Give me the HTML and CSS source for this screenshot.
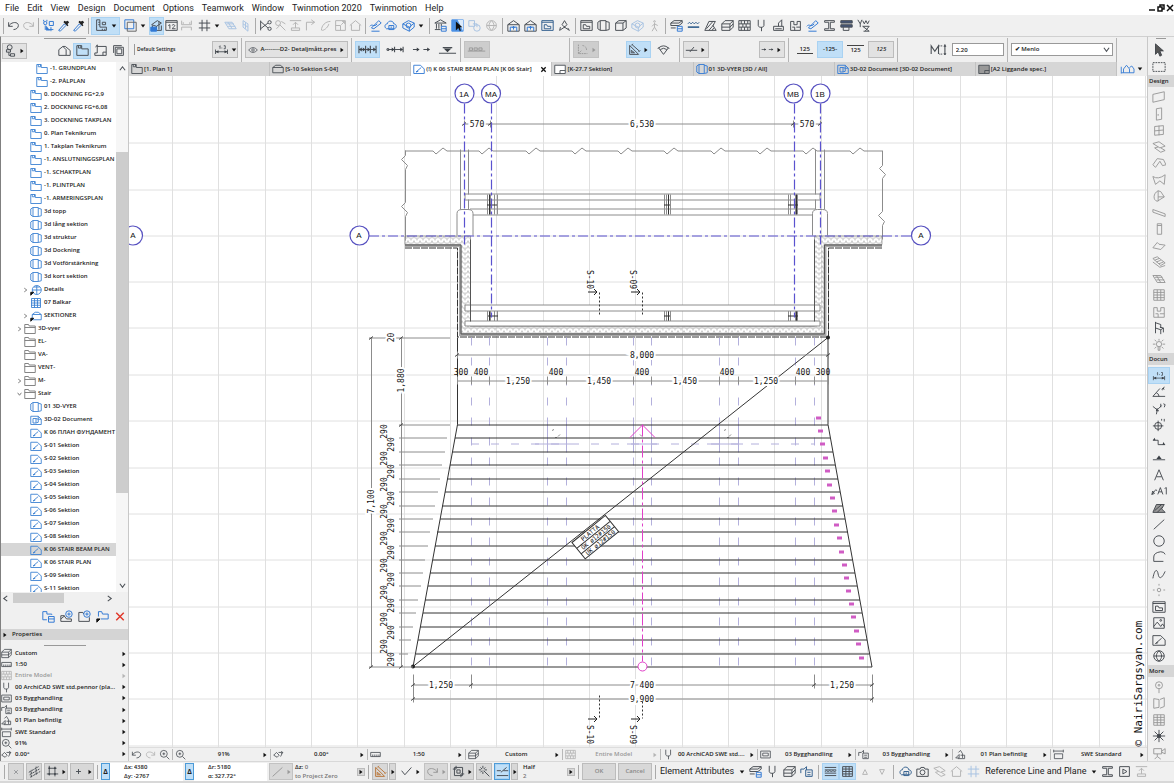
FILE: index.html
```html
<!DOCTYPE html>
<html lang="en">
<head>
<meta charset="utf-8">
<title>K 06 STAIR BEAM PLAN</title>
<link rel="stylesheet" href="styles.css">
</head>
<body>
<svg class="defs" aria-hidden="true">
<symbol id="undo" viewBox="0 0 16 16"><path d="M2 4v5h5M2 9C5 3 14 3 14 8c0 3-3 5-6 5"/></symbol>
<symbol id="redo" viewBox="0 0 16 16"><path d="M14 4v5H9M14 9C11 3 2 3 2 8c0 3 3 5 6 5"/></symbol>
<symbol id="pick" viewBox="0 0 16 16"><circle cx="4" cy="5" r="2"/><path d="M2 1v2M6 1v2M4 8v5l2-2M9 3h5v5h-5zM8 13h6M11 10v5"/><path d="M5 8l5 6H5z" class="s"/></symbol>
<symbol id="dropper" viewBox="0 0 16 16"><path d="M2 14l7-8 2 2-7 7z"/><path d="M8 4l5 5 1-1-1-2 2-2-2-2-2 1-2-1z" fill="#222" stroke="none"/></symbol>
<symbol id="plan" viewBox="0 0 16 16"><path d="M1 14V2h6v4h8v8zM3 2v3h3V2"/></symbol>
<symbol id="elev" viewBox="0 0 16 16"><path d="M1 13V6l4-3h6l4 3v7zM1 6h14"/></symbol>
<symbol id="sheet" viewBox="0 0 16 16"><path d="M1 3h14v11H1z" fill="#999"/><path d="M9 14v-4h6"/></symbol>
<symbol id="sheetw" viewBox="0 0 16 16"><path d="M1 3h14v11H1z" fill="#fff"/><path d="M8 14v-4h7"/></symbol>
<symbol id="box3" viewBox="0 0 16 16"><path d="M4 2h7v12H4zM11 3l4 1v9l-4 1M1 4l3-2M1 4v8l3 2"/></symbol>
<symbol id="sec" viewBox="0 0 16 16"><path d="M1 3h9l5 5v6H1zM4 12l7-6M4 12l3-1"/></symbol>
<symbol id="doc3" viewBox="0 0 16 16"><path d="M1 3h10l4 4v7H1zM4 6h4v6H4zM8 6l3 1v4l-3 1M11 3v4h4"/></symbol>
<symbol id="folder" viewBox="0 0 16 16"><path d="M1 14V2h5l1 2h8v10zM1 6h14"/></symbol>
<symbol id="detail" viewBox="0 0 16 16"><circle cx="9" cy="8" r="6"/><path d="M3 8h12M9 2v12M5 4h8"/><path d="M1 15v-4h4z" fill="#111" stroke="#111"/></symbol>
<symbol id="sched" viewBox="0 0 16 16"><path d="M2 2h12v12H2zM2 5h12M2 8h12M2 11h12M6 2v12M10 2v12"/></symbol>
<symbol id="sects" viewBox="0 0 16 16"><path d="M3 13V6l4-3h4l4 3v7zM3 6h12"/><path d="M1 15v-4h4z" fill="#111" stroke="#111"/></symbol>
<symbol id="right" viewBox="0 0 8 8"><path d="M2 1l4 3-4 3z" class="s"/></symbol>
<symbol id="down" viewBox="0 0 8 8"><path d="M1 2h6L4 6z" class="s"/></symbol>
<symbol id="chev" viewBox="0 0 8 8"><path d="M2 1l4 3-4 3"/></symbol>
<symbol id="chevd" viewBox="0 0 8 8"><path d="M1 2l3 4 3-4"/></symbol>
<symbol id="chevu" viewBox="0 0 8 8"><path d="M1 6l3-4 3 4"/></symbol>
<symbol id="chevl" viewBox="0 0 8 8"><path d="M6 1L2 4l4 3"/></symbol>
<symbol id="ruler" viewBox="0 0 16 16"><path d="M1 5h14v6H1zM4 8v3M7 8v3M10 8v3M13 8v3"/></symbol>
<symbol id="rulerv" viewBox="0 0 16 16"><path d="M2 1v13h12v-4H6V1zM9 4h4v3H9zM4 4h2M4 7h2M9 12v2M12 12v2" /></symbol>
<symbol id="square" viewBox="0 0 16 16"><path d="M1 1h11v11H1z"/><path d="M4 4h11v11H4z" stroke="#666"/></symbol>
<symbol id="snap" viewBox="0 0 16 16"><path d="M2 7l7-5 5 3-6 4zM3 8v5h4M8 9v5h6V8M11 3v10"/><path d="M1 10h7v5H1z" fill="#3279d4" stroke="#3279d4"/></symbol>
<symbol id="twelve" viewBox="0 0 16 16"><path d="M1 2h14v12H1zM1 4h14M4 8l2-1v5M9 8c0-2 3-1 3 0 0 1-2 2-3 4h4"/></symbol>
<symbol id="ibeam" viewBox="0 0 16 16"><path d="M2 2h12v2H9v8h5v2H2v-2h5V4H2z"/></symbol>
<symbol id="hh" viewBox="0 0 16 16"><path d="M2 2v5h12V2M2 14v-4h12v4M4 4v2M12 4v2"/></symbol>
<symbol id="hash" viewBox="0 0 16 16"><path d="M5 1v14M11 1v14M1 5h14M1 11h14"/></symbol>
<symbol id="para" viewBox="0 0 16 16"><path d="M1 4h9l5 8H6zM3 6h9M5 9h9M5 4l5 8"/></symbol>
<symbol id="parav" viewBox="0 0 16 16"><path d="M5 2l6 4v9l-6-5zM5 6l6 4M8 4v8"/></symbol>
<symbol id="cut" viewBox="0 0 16 16"><circle cx="13" cy="4" r="2"/><circle cx="13" cy="12" r="2"/><path d="M2 3l9 8M2 12l9-7M2 2v12"/></symbol>
<symbol id="wrench" viewBox="0 0 16 16"><circle cx="5" cy="5" r="3"/><path d="M7 7l7 7M9 3l5 3M3 12l4-4"/></symbol>
<symbol id="adjust" viewBox="0 0 16 16"><path d="M1 2h14M8 4v7M5 7l3-3 3 3M3 11h10v3H3z"/></symbol>
<symbol id="corner" viewBox="0 0 16 16"><path d="M3 14V4h10M9 1l4 3-4 3"/></symbol>
<symbol id="arc" viewBox="0 0 16 16"><path d="M3 14C3 8 8 3 14 3M4 14c3 0 8-5 8-8"/></symbol>
<symbol id="resize" viewBox="0 0 16 16"><path d="M2 2h12v12H2zM2 8h6v6M9 7l4-4M10 3h3v3"/></symbol>
<symbol id="home" viewBox="0 0 16 16"><path d="M1 8l7-6 7 6M3 7v7h10V7"/></symbol>
<symbol id="house" viewBox="0 0 16 16"><path d="M1 7l7-5 7 5v8H1zM1 7h14"/><path d="M4 15v-5h8v5M8 13V9M6 11l2-2 2 2" stroke="#3279d4"/></symbol>
<symbol id="pencil" viewBox="0 0 16 16"><path d="M3 11l9-9 3 3-9 7zM1 9c3-4 5 2 9-3M3 15h10"/></symbol>
<symbol id="cloud" viewBox="0 0 16 16"><path d="M3 12C0 10 1 6 4 6c1-5 8-4 8 0 4 0 4 5 1 6z"/><path d="M6 8h6v5H6zM8 10h2"/></symbol>
<symbol id="cube" viewBox="0 0 16 16"><path d="M2 5l4-3h9v9l-4 3H2zM2 5h9v9M11 5l4-3"/></symbol>
<symbol id="cubes" viewBox="0 0 16 16"><path d="M1 6l7-4 7 3-6 5zM1 6v5l8 4v-5M15 5v5l-6 5"/><circle cx="8" cy="8" r="3"/></symbol>
<symbol id="bank" viewBox="0 0 16 16"><path d="M1 5l7-4 7 4zM3 6v6M6 6v6M9 6v3M1 13h7"/><path d="M9 9h6v6H9zM9 12h6" stroke="#3279d4"/></symbol>
<symbol id="cursorbox" viewBox="0 0 16 16"><path d="M1 1h14v14H1z" fill="#4c92e6" stroke="#4c92e6"/><path d="M8 1h7v14z" fill="#dcebfb" stroke="none"/><path d="M6 3v11l3-3 2 4 1-1-1-4h3z" fill="#111" stroke="none"/></symbol>
<symbol id="copyc" viewBox="0 0 16 16"><path d="M1 2h7v7H1zM6 6h5v4"/><circle cx="11" cy="11" r="4"/></symbol>
<symbol id="globe" viewBox="0 0 16 16"><circle cx="8" cy="8" r="6"/><path d="M2 8h12M8 2c-4 4-4 8 0 12M8 2c4 4 4 8 0 12"/></symbol>
<symbol id="window" viewBox="0 0 16 16"><path d="M1 2h14v12H1zM1 4h14M4 12V7h3l1 2h4v3z"/></symbol>
<symbol id="axo" viewBox="0 0 16 16"><path d="M8 2l3 5-3 3-3-3zM8 9v2M8 10l-6 4M8 10l6 4M2 14l1-4M14 14l-2-3"/></symbol>
<symbol id="walk" viewBox="0 0 16 16"><circle cx="8" cy="3" r="1"/><path d="M8 5v5l3 5M8 10l-3 5M5 9l3-3 4 2"/></symbol>
<symbol id="layers" viewBox="0 0 16 16"><path d="M1 6l4-4h10l-4 4zM1 6v8h10l4-4V2M1 10h10l4-4M11 6v8"/></symbol>
<symbol id="layb" viewBox="0 0 16 16"><path d="M1 5l4-3h10l-4 3zM1 5v3h10l4-3V2M1 11h6"/><path d="M9 9h6v6H9zM9 12h6" stroke="#3279d4"/></symbol>
<symbol id="wave" viewBox="0 0 16 16"><path d="M1 6l2-2 2 2 2-2 2 2 2-2 2 2 2-2"/><path d="M1 10h14" stroke-width="2"/></symbol>
<symbol id="hatch" viewBox="0 0 16 16"><path d="M1 14L6 3h8l-3 5 4 6zM3 12l8-9M6 14l6-7M10 14l2-3"/></symbol>
<symbol id="mesh" viewBox="0 0 16 16"><path d="M1 2h14v12H1zM1 6h14M1 10h14M4 2v4M8 2v4M12 2v4M6 6v4M10 6v4M4 10v4M8 10v4M12 10v4"/></symbol>
<symbol id="bands" viewBox="0 0 16 16"><path d="M1 3h14M1 13h14M1 6h14M1 10h14M1 8l2-1 2 1 2-1 2 1 2-1 2 1 2-1"/></symbol>
<symbol id="pen" viewBox="0 0 16 16"><path d="M4 1v7c0 3 7 3 7 0V1M8 10v5"/></symbol>
<symbol id="brush" viewBox="0 0 16 16"><path d="M2 9h12v5H2zM8 9V5l4-4v8M4 12h8"/></symbol>
<symbol id="comp" viewBox="0 0 16 16"><path d="M1 2h14v3H1zM1 7h14v3H1z" fill="#445577"/><path d="M4 10v4h7v-4"/></symbol>
<symbol id="yw" viewBox="0 0 16 16"><path d="M1 1l3 5 2-5M4 6v4M7 2l2 4 2-4 2 4 2-4M7 9h8l-5 6M8 15h7M7 9l8 6"/></symbol>
<symbol id="org" viewBox="0 0 16 16"><circle cx="7" cy="4" r="3"/><path d="M3 7h5v3H3zM8 12h5v3H8zM6 10v4h2"/></symbol>
<symbol id="model" viewBox="0 0 16 16"><path d="M1 14V7l5-4 4 4v7zM6 3h3l6 5v6h-5"/></symbol>
<symbol id="layout" viewBox="0 0 16 16"><path d="M4 1v10H1v3h14V3H4M11 14v-4h4M2 4l2-3"/></symbol>
<symbol id="books" viewBox="0 0 16 16"><path d="M4 4h10v10H4zM2 11V2h10M6 6h6v6H6z"/></symbol>
<symbol id="dim" viewBox="0 0 20 16"><path d="M2 11h16M2 8v6M18 8v6M7 4l1-1v4M10 6h1M13 3h2v4h-2"/><path d="M2 11l4-2v4zM18 11l-4-2v4z" class="s"/></symbol>
<symbol id="dims" viewBox="0 0 20 10"><path d="M1 5h18M1 1v8M8 1v8M13 1v8M19 1v8"/><path d="M1 5l3-2v4zM8 5L5 3v4zM13 5l-3-2v4zM19 5l-3-2v4z" class="s"/></symbol>
<symbol id="dimc" viewBox="0 0 20 10"><path d="M3 5h14M9 2v6M18 2v6"/><circle cx="2" cy="5" r="1"/><path d="M9 5L6 3v4zM18 5l-3-2v4z" class="s"/></symbol>
<symbol id="dima" viewBox="0 0 20 10"><path d="M1 5h6M12 5h6"/><path d="M8 5L5 3v4zM19 5l-3-2v4z" class="s"/></symbol>
<symbol id="level" viewBox="0 0 20 10"><path d="M1 9h18M5 3h10"/><path d="M6 4h8l-4 4z" class="s"/></symbol>
<symbol id="chain" viewBox="0 0 24 10"><path d="M1 7h22M3 3h4v3H3zM9 3h4v3H9zM15 3h4v3h-4z"/></symbol>
<symbol id="axes" viewBox="0 0 16 16"><path d="M3 2v11h11M3 13l4-4M8 3q5 1 5 6" stroke-dasharray="2 1"/></symbol>
<symbol id="tri" viewBox="0 0 16 16"><path d="M2 3v11h11zM4 9v3h4zM5 2l9 8M4 3l2-2M13 11l2-2"/></symbol>
<symbol id="fan" viewBox="0 0 16 16"><path d="M2 6q6-5 12 0L8 14zM4 8q4-3 8 0"/><path d="M1 7l2-2M15 7l-2-2"/></symbol>
<symbol id="slash" viewBox="0 0 16 16"><path d="M1 9h14M6 11l5-6"/></symbol>
<symbol id="mheight" viewBox="0 0 18 12"><path d="M1 11V2l4 6 4-6v9"/><path d="M10 2h4M10 11h4" stroke-dasharray="1 1"/><path d="M16 2v9M15 3l1-2 1 2M15 10l1 2 1-2"/></symbol>
<symbol id="arrow" viewBox="0 0 16 16"><path d="M4 1v12l3-3 2 5 2-1-2-5h4z" fill="#555"/></symbol>
<symbol id="marquee" viewBox="0 0 16 16"><path d="M1 3h14v10H1z" stroke-dasharray="2 1"/></symbol>
<symbol id="wall" viewBox="0 0 16 16"><path d="M1 5l13-3v9L1 14z"/></symbol>
<symbol id="door" viewBox="0 0 16 16"><path d="M5 2l6-1v13l-6 1zM7 8v2"/></symbol>
<symbol id="win" viewBox="0 0 16 16"><path d="M3 4l10-1v10L3 14zM8 3v11M3 9l10-1"/></symbol>
<symbol id="slabs" viewBox="0 0 16 16"><path d="M1 4l7-2 7 5-6 2zM3 9l4-1M3 9l7 5 5-2-5-3"/></symbol>
<symbol id="roof" viewBox="0 0 16 16"><path d="M1 10l5-7 7 1 3 6-4 1-3-5-5 7z"/></symbol>
<symbol id="shell" viewBox="0 0 16 16"><path d="M1 4q6 4 14-2l-1 11-5-4-5 4z"/></symbol>
<symbol id="morph" viewBox="0 0 16 16"><path d="M7 2C1 5 1 13 6 14l8-5-4-6zM7 2v12M7 9h7"/></symbol>
<symbol id="beam" viewBox="0 0 16 16"><path d="M1 4l14 5v3L1 7z"/></symbol>
<symbol id="column" viewBox="0 0 16 16"><path d="M6 2h5v12H6zM6 4h5"/></symbol>
<symbol id="slab" viewBox="0 0 16 16"><path d="M1 10l5-6 2 2 7 1-5 5z"/></symbol>
<symbol id="stairs" viewBox="0 0 16 16"><path d="M1 4l5-2 9 7-5 3zM3 6l5-2M5 8l5-2M8 10l5-2M1 8l8 6 6-2"/></symbol>
<symbol id="stamp" viewBox="0 0 16 16"><path d="M2 3v11h12V3h-4v4H6V3zM4 10h3v4M9 10h5"/></symbol>
<symbol id="chair" viewBox="0 0 16 16"><path d="M4 1v13M4 2l6 2v4M4 8l6 2 3-2-4-1M10 10v5M13 8v5"/></symbol>
<symbol id="lamp" viewBox="0 0 16 16"><circle cx="8" cy="7" r="3"/><path d="M7 10v4h2v-4M8 1v2M1 7h3M12 7h3M3 2l2 2M13 2l-2 2M3 12l2-2M13 12l-2-2"/></symbol>
<symbol id="angle" viewBox="0 0 16 16"><path d="M1 13h14M1 13L9 4M5 9q3 1 3 4M11 5q2-3 3 0M14 2l-2 4"/></symbol>
<symbol id="radial" viewBox="0 0 16 16"><path d="M1 5l5 4-1 5M5 10l6-6M10 2v4M13 2l2 1-1 3M6 7l-1 3h3"/></symbol>
<symbol id="levelc" viewBox="0 0 16 16"><circle cx="7" cy="9" r="4"/><path d="M7 3v12M1 9h12M11 3V1M14 1v3"/></symbol>
<symbol id="steps" viewBox="0 0 16 16"><path d="M1 6h6v5h8"/><path d="M1 6l2-3 1 3zM12 11l1-3 2 3z" class="s"/></symbol>
<symbol id="lvl" viewBox="0 0 16 16"><path d="M1 10h14"/><path d="M5 9l3-4 3 4z" class="s"/></symbol>
<symbol id="text" viewBox="0 0 16 16"><path d="M3 14L8 2l5 12M5 10h6"/></symbol>
<symbol id="label" viewBox="0 0 20 16"><path d="M1 12l5-6M1 12l1-4 2 3zM6 8l1-1M8 12l3-8 3 8M9 9h4M16 5l2-1v8"/></symbol>
<symbol id="fill" viewBox="0 0 16 16"><path d="M1 13L5 4h9l-3 5 4 4z" fill="#999"/><path d="M3 11l8-7M6 13l6-6"/></symbol>
<symbol id="line" viewBox="0 0 16 16"><path d="M2 14L14 3"/></symbol>
<symbol id="circle" viewBox="0 0 16 16"><circle cx="8" cy="8" r="6"/></symbol>
<symbol id="poly" viewBox="0 0 16 16"><path d="M15 5q-1-3-5-3Q2 3 2 8v5h11"/></symbol>
<symbol id="spline" viewBox="0 0 16 16"><path d="M1 13C3 2 6 2 7 8s4 6 8-3"/></symbol>
<symbol id="hot" viewBox="0 0 16 16"><circle cx="8" cy="8" r="2"/><path d="M8 1v2M8 13v2M1 8h2M13 8h2"/></symbol>
<symbol id="image" viewBox="0 0 16 16"><path d="M2 2h12v12H2zM2 12l4-5 4 5 2-3 2 3"/><circle cx="10" cy="5" r="1"/></symbol>
<symbol id="cam" viewBox="0 0 16 16"><path d="M1 5h4l1-2h4l1 2h4v9H1z"/><circle cx="8" cy="9" r="3"/></symbol>
<symbol id="video" viewBox="0 0 16 16"><path d="M2 3h9v6H2zM11 6l4-3v6l-4-2M6 9v3M3 15l3-3 4 3"/></symbol>
<symbol id="sun" viewBox="0 0 16 16"><circle cx="8" cy="8" r="2"/><path d="M8 1v14M1 8h14M3 3l10 10M13 3L3 13"/></symbol>
<symbol id="pin" viewBox="0 0 16 16"><circle cx="8" cy="6" r="4"/><circle cx="8" cy="6" r="1"/><path d="M8 10v5"/></symbol>
<symbol id="pane" viewBox="0 0 16 16"><path d="M2 3l6 1v9l-6 1zM9 4l5-2v10l-5 2"/></symbol>
<symbol id="zoom" viewBox="0 0 16 16"><circle cx="7" cy="7" r="5"/><path d="M11 11l4 4M7 5v4M5 7h4"/></symbol>
<symbol id="orient" viewBox="0 0 16 16"><path d="M1 9l4-4 4 4-3 3zM8 5h6l-3 6M12 3l2 2-2 2"/></symbol>
<symbol id="frame" viewBox="0 0 16 16"><path d="M1 3h14v10H1zM4 6h8v4H4z"/></symbol>
<symbol id="reno" viewBox="0 0 16 16"><path d="M1 10V5h4l3-3v4M7 6h8v8H7zM9 9h4M9 12h4"/></symbol>
<symbol id="build" viewBox="0 0 16 16"><path d="M1 13l5-5v5zM5 5l3-3 3 5v6M8 9h6v5H4"/></symbol>
<symbol id="std" viewBox="0 0 16 16"><path d="M1 3h14M1 1v4M15 1v4M2 7h12v7H2z"/></symbol>
<symbol id="newb" viewBox="0 0 16 16"><path d="M1 12V2h5v3h6M1 12h5M12 5v1"/><path d="M8 8h7v7H8zM8 11h7"/></symbol>
<symbol id="newc" viewBox="0 0 16 16"><path d="M1 14V7h4l3 4h6v3zM1 11l5-4"/><circle cx="11" cy="5" r="4" stroke="#3279d4"/><path d="M11 3v4M9 5h4" stroke="#3279d4"/></symbol>
<symbol id="newf" viewBox="0 0 16 16"><path d="M1 14V3h5l1 2M14 9v5H1"/><circle cx="11" cy="5" r="4" stroke="#3279d4"/><path d="M11 3v4M9 5h4" stroke="#3279d4"/></symbol>
<symbol id="link" viewBox="0 0 16 16"><path d="M3 8V2h4l1 3h7v6H6"/><path d="M1 15v-4h4z" fill="#111" stroke="#111"/></symbol>
<symbol id="x" viewBox="0 0 16 16"><path d="M3 3l10 10M13 3L3 13"/></symbol>
<symbol id="eye" viewBox="0 0 16 16"><path d="M1 8q7-8 14 0-7 8-14 0"/><circle cx="8" cy="8" r="2"/></symbol>
<symbol id="hatchl" viewBox="0 0 16 16"><path d="M1 9L13 2M2 12L14 5M3 15l12-7M4 15V6M10 12V2" stroke-dasharray="3 1"/></symbol>
<symbol id="grids" viewBox="0 0 16 16"><path d="M4 1v12M1 11h14M4 4h9M11 2v12"/><path d="M3 3h2v2H3zM10 3h2v2h-2zM3 10h2v2H3zM10 10h2v2h-2z" class="s"/></symbol>
<symbol id="plus" viewBox="0 0 16 16"><path d="M8 5v6M5 8h6"/></symbol>
<symbol id="check" viewBox="0 0 16 16"><path d="M2 7l4 5 8-9"/></symbol>
<symbol id="bbox" viewBox="0 0 16 16"><path d="M3 3h10v10H3zM1 5h4V1M11 15v-4h4M6 6h4v4H6z"/></symbol>
<symbol id="wand" viewBox="0 0 16 16"><path d="M7 7l7 7M6 1v3M6 8v3M1 6h3M8 6h3M3 3l2 2M9 3L7 5M3 9l2-2"/></symbol>
<symbol id="guide" viewBox="0 0 16 16"><path d="M1 7h5M6 9l7-6M9 7h6M1 13h14"/></symbol>
<symbol id="tru" viewBox="0 0 10 10"><path d="M5 2l3 6H2z"/></symbol>
<symbol id="trd" viewBox="0 0 10 10"><path d="M5 8L2 2h6z"/></symbol>
<symbol id="play" viewBox="0 0 16 16"><path d="M2 2h12v12H2zM6 5l5 3-5 3z"/></symbol>
<symbol id="skyline" viewBox="0 0 20 16"><path d="M1 14V5M1 13h17M4 13V8l4-5 4 5v5M12 6l3-2 3 4v5"/></symbol>
<symbol id="mini" viewBox="0 0 8 8"><path d="M1 6h6"/></symbol>
<symbol id="rest" viewBox="0 0 8 8"><path d="M1 3h4v4H1zM3 3V1h4v4H5"/></symbol>
<symbol id="cross" viewBox="0 0 8 8"><path d="M1 1l6 6M7 1L1 7"/></symbol>
</svg>

<header class="menubar">
<nav><a href="#">File</a><a href="#">Edit</a><a href="#">View</a><a href="#">Design</a><a href="#">Document</a><a href="#">Options</a><a href="#">Teamwork</a><a href="#">Window</a><a href="#">Twinmotion 2020</a><a href="#">Twinmotion</a><a href="#">Help</a></nav>
<div class="winctl"><button aria-label="Minimize"><svg><use href="#mini"/></svg></button><button aria-label="Restore"><svg><use href="#rest"/></svg></button><button aria-label="Close"><svg><use href="#cross"/></svg></button></div>
</header>

<div class="toolbar">
<div class="grp tight"><button aria-label="Undo"><svg><use href="#undo"/></svg></button><button class="dis" aria-label="Redo"><svg><use href="#redo"/></svg></button></div>
<div class="grp tight"><button class="blue" aria-label="Find"><svg><use href="#pick"/></svg></button><button class="blue" aria-label="Pick up"><svg><use href="#dropper"/></svg></button><button class="blue" aria-label="Inject"><svg><use href="#dropper"/></svg></button></div>
<div class="grp tight"><button class="on split" aria-label="Rulers"><svg><use href="#rulerv"/></svg><svg class="ar"><use href="#down"/></svg></button><button class="split blue" aria-label="Frames"><svg><use href="#square"/></svg><svg class="ar"><use href="#down"/></svg></button><button class="on" aria-label="Snap"><svg><use href="#snap"/></svg></button><button aria-label="Dimensions"><svg><use href="#twelve"/></svg></button><button class="dis" aria-label="Guides"><svg><use href="#hh"/></svg></button><button class="split" aria-label="Grid"><svg><use href="#hash"/></svg><svg class="ar"><use href="#down"/></svg></button><button class="pale" aria-label="Plane"><svg><use href="#para"/></svg></button><button class="pale" aria-label="Vertical plane"><svg><use href="#parav"/></svg></button></div>
<div class="grp tight"><button aria-label="Cut"><svg><use href="#cut"/></svg></button><button class="dis" aria-label="Trim"><svg><use href="#wrench"/></svg></button><button class="dis" aria-label="Adjust"><svg><use href="#adjust"/></svg></button><button class="dis" aria-label="Intersect"><svg><use href="#corner"/></svg></button><button class="dis" aria-label="Fillet"><svg><use href="#arc"/></svg></button><button class="dis" aria-label="Resize"><svg><use href="#resize"/></svg></button><button class="dis" aria-label="Roof"><svg><use href="#home"/></svg></button></div>
<div class="grp tight"><button class="blue" aria-label="Edit"><svg><use href="#pencil"/></svg></button><button class="blue" aria-label="Cloud"><svg><use href="#cloud"/></svg></button><button class="split blue" aria-label="Model"><svg><use href="#cubes"/></svg><svg class="ar"><use href="#down"/></svg></button></div>
<div class="grp"><button aria-label="Library"><svg><use href="#bank"/></svg></button><button aria-label="Select"><svg><use href="#cursorbox"/></svg></button><button class="pale" aria-label="Copy"><svg><use href="#copyc"/></svg></button><button class="dis" aria-label="Publish"><svg><use href="#globe"/></svg></button></div>
<div class="grp"><button aria-label="Story up"><svg><use href="#house"/></svg></button><button aria-label="Story down"><svg><use href="#house"/></svg></button><button class="navy" aria-label="Worksheet"><svg><use href="#window"/></svg></button><button aria-label="Axonometry"><svg><use href="#axo"/></svg></button></div>
<div class="grp"><button aria-label="Floor plan"><svg><use href="#window"/></svg></button><button aria-label="3D"><svg><use href="#box3"/></svg></button><button aria-label="Perspective"><svg><use href="#cube"/></svg></button><button class="pale" aria-label="Orbit"><svg><use href="#cubes"/></svg></button><button class="dis" aria-label="Walk"><svg><use href="#walk"/></svg></button></div>
<div class="grp"><button aria-label="Layers"><svg><use href="#layb"/></svg></button><button class="navy" aria-label="Lines"><svg><use href="#wave"/></svg></button><button aria-label="Fills"><svg><use href="#hatch"/></svg></button><button aria-label="Surfaces"><svg><use href="#layers"/></svg></button><button aria-label="Composites"><svg><use href="#mesh"/></svg></button><button aria-label="Pens"><svg><use href="#pen"/></svg></button><button aria-label="Materials"><svg><use href="#brush"/></svg></button><button aria-label="Zones"><svg><use href="#stamp"/></svg></button><button class="blue" aria-label="Renovation"><svg><use href="#pencil"/></svg></button><button aria-label="Profiles"><svg><use href="#ibeam"/></svg></button><button aria-label="Attributes"><svg><use href="#comp"/></svg></button><button aria-label="Markup"><svg><use href="#yw"/></svg></button></div>
</div>

<main>
<aside class="navigator">
<div class="grip"></div>
<div class="navtabs"><button class="btn" aria-label="Project"><svg><use href="#org"/></svg><svg class="ar"><use href="#right"/></svg></button><div><button aria-label="Project map"><svg><use href="#model"/></svg></button><button class="on" aria-label="View map"><svg><use href="#plan"/></svg></button><button aria-label="Layout book"><svg><use href="#layout"/></svg></button><button aria-label="Publisher"><svg><use href="#books"/></svg></button></div></div>
<div class="treebox">
<ul class="tree">
<li class="deep"><i></i><svg><use href="#plan"/></svg>-1. GRUNDPLAN</li>
<li class="deep"><i></i><svg><use href="#plan"/></svg>-2. PÅLPLAN</li>
<li><i></i><svg><use href="#plan"/></svg>0. DOCKNING FG+2,9</li>
<li><i></i><svg><use href="#plan"/></svg>2. DOCKNING FG+6,08</li>
<li><i></i><svg><use href="#plan"/></svg>3. DOCKNING TAKPLAN</li>
<li><i></i><svg><use href="#plan"/></svg>0. Plan Teknikrum</li>
<li><i></i><svg><use href="#plan"/></svg>1. Takplan Teknikrum</li>
<li><i></i><svg><use href="#plan"/></svg>-1. ANSLUTNINGGSPLAN</li>
<li><i></i><svg><use href="#plan"/></svg>-1. SCHAKTPLAN</li>
<li><i></i><svg><use href="#plan"/></svg>-1. PLINTPLAN</li>
<li><i></i><svg><use href="#plan"/></svg>-1. ARMERINGSPLAN</li>
<li><i></i><svg><use href="#box3"/></svg>3d topp</li>
<li><i></i><svg><use href="#box3"/></svg>3d lång sektion</li>
<li><i></i><svg><use href="#box3"/></svg>3d struktur</li>
<li><i></i><svg><use href="#box3"/></svg>3d Dockning</li>
<li><i></i><svg><use href="#box3"/></svg>3d Votförstärkning</li>
<li><i></i><svg><use href="#box3"/></svg>3d kort sektion</li>
<li><svg class="tw"><use href="#chev"/></svg><svg><use href="#detail"/></svg>Details</li>
<li><i></i><svg><use href="#sched"/></svg>07 Balkar</li>
<li><svg class="tw"><use href="#chev"/></svg><svg><use href="#sects"/></svg>SEKTIONER</li>
<li class="fold"><svg class="tw"><use href="#chev"/></svg><svg><use href="#folder"/></svg>3D-vyer</li>
<li class="fold"><i></i><svg><use href="#folder"/></svg>EL-</li>
<li class="fold"><i></i><svg><use href="#folder"/></svg>VA-</li>
<li class="fold"><i></i><svg><use href="#folder"/></svg>VENT-</li>
<li class="fold"><svg class="tw"><use href="#chev"/></svg><svg><use href="#folder"/></svg>M-</li>
<li class="fold open"><svg class="tw"><use href="#chevd"/></svg><svg><use href="#folder"/></svg>Stair</li>
<li><i></i><svg><use href="#box3"/></svg>01 3D-VYER</li>
<li><i></i><svg><use href="#doc3"/></svg>3D-02 Document</li>
<li><i></i><svg><use href="#sec"/></svg>K 06 ПЛАН ФУНДАМЕНТ</li>
<li><i></i><svg><use href="#sec"/></svg>S-01 Sektion</li>
<li><i></i><svg><use href="#sec"/></svg>S-02 Sektion</li>
<li><i></i><svg><use href="#sec"/></svg>S-03 Sektion</li>
<li><i></i><svg><use href="#sec"/></svg>S-04 Sektion</li>
<li><i></i><svg><use href="#sec"/></svg>S-05 Sektion</li>
<li><i></i><svg><use href="#sec"/></svg>S-06 Sektion</li>
<li><i></i><svg><use href="#sec"/></svg>S-07 Sektion</li>
<li><i></i><svg><use href="#sec"/></svg>S-08 Sektion</li>
<li class="sel"><i></i><svg><use href="#sec"/></svg>K 06 STAIR BEAM PLAN</li>
<li><i></i><svg><use href="#sec"/></svg>K 06 STAIR PLAN</li>
<li><i></i><svg><use href="#sec"/></svg>S-09 Sektion</li>
<li><i></i><svg><use href="#sec"/></svg>S-11 Sektion</li>
</ul>
<div class="vscroll"><svg><use href="#chevu"/></svg><div class="thumb"></div><svg><use href="#chevd"/></svg></div>
</div>
<div class="hscroll"><svg><use href="#chevl"/></svg><div class="thumb"></div><svg><use href="#chev"/></svg></div>
<div class="navacts"><button class="blue" aria-label="Save view"><svg><use href="#newb"/></svg></button><button aria-label="Clone"><svg><use href="#newc"/></svg></button><button aria-label="New folder"><svg><use href="#newf"/></svg></button><button class="blue" aria-label="Shortcut"><svg><use href="#link"/></svg></button><button class="red" aria-label="Delete"><svg><use href="#x"/></svg></button></div>
<button class="prophead"><svg class="ar"><use href="#right"/></svg>Properties</button>
<div class="grip low"></div>
<div class="props">
<button><svg><use href="#layers"/></svg><span>Custom</span><svg class="ar"><use href="#right"/></svg></button>
<button><svg><use href="#ruler"/></svg><span>1:50</span><svg class="ar"><use href="#right"/></svg></button>
<button class="dis"><svg><use href="#mesh"/></svg><span>Entire Model</span><svg class="ar"><use href="#right"/></svg></button>
<button><svg><use href="#pen"/></svg><span>00 ArchiCAD SWE std.pennor (pla...</span><svg class="ar"><use href="#right"/></svg></button>
<button><svg><use href="#frame"/></svg><span>03 Bygghandling</span><svg class="ar"><use href="#right"/></svg></button>
<button><svg><use href="#reno"/></svg><span>03 Bygghandling</span><svg class="ar"><use href="#right"/></svg></button>
<button><svg><use href="#build"/></svg><span>01 Plan befintlig</span><svg class="ar"><use href="#right"/></svg></button>
<button><svg><use href="#std"/></svg><span>SWE Standard</span><svg class="ar"><use href="#right"/></svg></button>
<button><svg><use href="#zoom"/></svg><span>91%</span><svg class="ar"><use href="#right"/></svg></button>
<button><svg><use href="#orient"/></svg><span>0.00°</span><svg class="ar"><use href="#right"/></svg></button>
</div>
</aside>

<section class="work">
<div class="infobar">
<div class="cell spread"><span class="tiny">Default Settings</span><button class="btn" aria-label="Dimension tool"><svg class="d"><use href="#dim"/></svg><svg class="ar"><use href="#down"/></svg></button></div>
<div class="cell"><button class="btn layer"><svg class="eye"><use href="#eye"/></svg>A--------D2- Detaljmått.pres<svg class="ar"><use href="#right"/></svg></button></div>
<div class="cell spread"><button class="on wide" aria-label="Linear"><svg class="w"><use href="#dims"/></svg></button><button aria-label="Cumulative"><svg class="w"><use href="#dimc"/></svg></button><button aria-label="Base line"><svg class="w"><use href="#dima"/></svg></button><button aria-label="Elevation"><svg class="w"><use href="#level"/></svg></button></div>
<div class="cell"><button class="btn off" aria-label="Chain"><svg class="w"><use href="#chain"/></svg></button></div>
<div class="cell spread"><button class="btn off" aria-label="Geometry"><svg><use href="#axes"/></svg><svg class="ar"><use href="#right"/></svg></button><div class="pair"><button class="on wide" aria-label="Aligned"><svg><use href="#tri"/></svg><svg class="ar"><use href="#right"/></svg></button><button class="wide" aria-label="Arc length"><svg><use href="#fan"/></svg></button></div></div>
<div class="cell spread"><button class="btn" aria-label="Witness line"><svg><use href="#slash"/></svg><svg class="ar"><use href="#right"/></svg></button><button class="btn" aria-label="Marker"><svg><use href="#dima"/></svg><svg class="ar"><use href="#right"/></svg></button></div>
<div class="cell spread num"><button><u>125</u></button><button class="on">-125-</button><button><b>125</b></button><button class="btn"><em>125</em></button></div>
<div class="cell end"><label for="size"><svg class="w"><use href="#mheight"/></svg></label><input id="size" value="2.20" aria-label="Text height"></div>
<div class="cell"><div class="combo"><select aria-label="Font"><option>✔ Menlo</option></select><svg><use href="#chevd"/></svg></div></div>
<div class="rest"></div>
</div>
<div class="tabs">
<a href="#"><svg><use href="#plan"/></svg>[1. Plan 1]</a>
<a href="#"><svg><use href="#elev"/></svg>[S-10 Sektion S-04]</a>
<a href="#" class="cur"><svg class="bl"><use href="#sec"/></svg>(!) K 06 STAIR BEAM PLAN [K 06 Stair]<button aria-label="Close tab"><svg><use href="#x"/></svg></button></a>
<a href="#"><svg><use href="#sheetw"/></svg>[K-27.7 Sektion]</a>
<a href="#"><svg class="bl"><use href="#box3"/></svg>01 3D-VYER [3D / All]</a>
<a href="#"><svg class="bl"><use href="#doc3"/></svg>3D-02 Document [3D-02 Document]</a>
<a href="#"><svg><use href="#sheet"/></svg>[A2 Liggande spec.]</a>
<button class="blue more" aria-label="Tab list"><svg class="w"><use href="#skyline"/></svg><svg class="ar"><use href="#down"/></svg></button>
</div>
<div class="canvas">
<svg viewBox="129 76 1018 672" preserveAspectRatio="xMidYMid slice">
<defs>
<pattern id="ins" width="6" height="5" patternUnits="userSpaceOnUse"><path d="M0 1q0 3 3 3t3-3M3 4v1M3 0v1" fill="none" stroke="#b5b5b5" stroke-width=".8"/></pattern>
</defs>
<path class="gridl" d="M172.500 76V748M218.500 76V748M265.500 76V748M311.500 76V748M357.500 76V748M404.500 76V748M450.500 76V748M496.500 76V748M543.500 76V748M589.500 76V748M635.500 76V748M682.500 76V748M728.500 76V748M774.500 76V748M821.500 76V748M867.500 76V748M913.500 76V748M960.500 76V748M1006.500 76V748M1052.500 76V748M1099.500 76V748M1145.500 76V748M129 97.500H1147M129 143.500H1147M129 190.500H1147M129 236.500H1147M129 282.500H1147M129 328.500H1147M129 375.500H1147M129 421.500H1147M129 468.500H1147M129 514.500H1147M129 560.500H1147M129 607.500H1147M129 653.500H1147M129 699.500H1147M129 746.500H1147"/>

<g class="thin">
<path d="M405 151.500H433l3 3 7-6 4 3H479l3 3 7-6 4 3H526l3 3 7-6 4 3H572l3 3 7-6 4 3H618l3 3 7-6 4 3H664l3 3 7-6 4 3H711l3 3 7-6 4 3H757l3 3 7-6 4 3H803l3 3 7-6 4 3H850l3 3 7-6 4 3H882"/>
<path d="M405.500 151v5l-4 4 6 6-2 4v33l-4 4 6 6-2 4v24M882.500 151v15l-3 3 6 6-3 4v33l-4 4 6 6-2 4v14"/>
<path d="M460.500 150V210M468.500 150V195M468.500 200V210M815.500 150V195M815.500 200V210M824.500 150V210"/>
<path d="M457 236V214q0-4 5-4h6q5 0 5 4v22M812.500 236V214q0-4 5-4h5q5 0 5 4v22"/>
<path d="M465 194.500H820M465 200.500H820M465 194V200M820 194V200M470 209.500H815M473 215.500H812"/>
<path d="M487.500 195V215M490.500 195V215M494.500 195V215M497.500 195V215M487.500 306V326M490.500 306V326M494.500 306V326M497.500 306V326M788.500 195V215M790.500 195V215M795.500 195V215M797.500 195V215M788.500 306V326M790.500 306V326M795.500 306V326M797.500 306V326M664.500 195V215M666.500 195V215M670.500 195V215M664.500 306V326M666.500 306V326M670.500 306V326"/>
</g>
<path class="ink" d="M487 205.500h10M488 316.500h10M788 205.500h10M788 316.500h10M664 205.500h6M664 316.500h6M489.500 195v20M668.500 195v20M489.500 306v20M668.500 306v20M796.500 195v20M796.500 306v20"/>
<path fill="url(#ins)" stroke="#888" stroke-width=".7" d="M405 236.500H470.500V327H814.500V236.500H882V245H824V334H461V245H405z"/>
<path class="thin beams" d="M465 305.500H820V311.500H465zM465 321.500H820V326.500H465z"/>
<path fill="none" stroke="#aaa" stroke-width="2" d="M405 246.500H460V335.500H825.500V246.500H882"/>
<path class="wallin" d="M405 245.500H461V334.500H824.500V245.500H882M470.500 240V322M814.500 240V322"/>
<path fill="none" stroke="#333" stroke-dasharray="7 1" d="M405 248.500H457.500V337.500H828.500V248.500H882"/>

<g class="joist"><path d="M471.500 338V667M489.500 338V667M547.500 338V667M566.500 338V667M633.500 338V667M651.500 338V667M719.500 338V667M738.500 338V667M795.500 338V667M814.500 338V667M471 444.500H814"/></g>
<path class="joists" d="M547.500 425v28M566.500 425v28M633.500 425v28M651.500 425v28M719.500 425v28M738.500 425v28M535 444.500h36M627 444.500h30M707 444.500h36"/>
<path class="thin" d="M552 431l2-1M560 435l-2 2M555 438h2M640 435l2 2M724 431l2-1M731 435l-2 2M727 438h2"/>

<path class="ink" d="M457.500 338V425L413 667.500H872L828 425V338M457 425.500H828M455 438.500H830M452 452.500H833M450 465.500H835M447 479.500H838M445 492.500H840M442 506.500H843M440 519.500H845M437 532.500H848M435 546.500H850M433 560.500H852M430 573.500H855M428 586.500H857M425 600.500H860M423 613.500H862M420 627.500H865M418 640.500H867M416 654.500H869M413 667L828 338"/>
<circle cx="413" cy="667" r="2"/><circle cx="828" cy="338" r="2"/>

<g class="thin">
<path d="M464 124.500H820M457 355.500H828M457 381.500H828M413 685.500H872M413 699.500H872M371.500 338V667M401.500 338V667"/>
<path d="M464.500 121v7M490.500 121v7M793.500 121v7M820.500 121v7M457.500 352v7M828.500 352v7M457.500 377v8M471.500 377v8M489.500 377v8M547.500 377v8M566.500 377v8M633.500 377v8M651.500 377v8M719.500 377v8M738.500 377v8M795.500 377v8M814.500 377v8M828.500 377v8M413.500 675V703M471.500 675V689M814.500 675V689M872.500 675V703"/>
<path d="M369 338.500H450M399 425.500H450M399 438.500H447M399 452.500H445M399 465.500H442M399 479.500H440M399 492.500H438M399 506.500H435M399 519.500H433M399 532.500H430M399 546.500H428M399 560.500H425M399 573.500H423M399 586.500H421M399 600.500H418M399 613.500H416M399 627.500H413M399 640.500H411M399 654.500H408M369 667.500H413"/>
</g>
<g class="tick"><path d="M462 126l4-3M488 126l4-3M791 126l4-3M818 126l4-3M455 357l4-3M826 357l4-3M411 687l4-3M469 687l4-3M812 687l4-3M870 687l4-3M411 701l4-3M870 701l4-3M369 340l4-3M369 669l4-3M399 340l4-3M399 427l4-3M399 669l4-3"/></g>

<g class="axis"><path d="M464.500 104V245M491.500 104V318M794.500 104V318M820.500 104V245M369 236.500H911"/></g>
<g class="bubble"><circle cx="464.500" cy="94" r="9.500"/><circle cx="491" cy="94" r="9.500"/><circle cx="793.500" cy="94" r="9.500"/><circle cx="820.500" cy="94" r="9.500"/><circle cx="359.500" cy="236" r="9.500"/><circle cx="921" cy="236" r="9.500"/><circle cx="133" cy="236" r="9.500"/></g>
<g class="btext"><text x="464" y="97">1A</text><text x="491" y="97">MA</text><text x="793" y="97">MB</text><text x="820" y="97">1B</text><text x="359" y="238">A</text><text x="921" y="238">A</text><text x="133" y="238">A</text></g>

<g class="dimt">
<text x="477" y="127">570</text><text x="642" y="127">6,530</text><text x="807" y="127">570</text>
<text x="642" y="358">8,000</text>
<g class="bare"><text x="461" y="375">300</text><text x="481" y="375">400</text><text x="556" y="375">400</text><text x="642" y="375">400</text><text x="727" y="375">400</text><text x="803" y="375">400</text><text x="823" y="375">300</text></g>
<text x="518" y="384">1,250</text><text x="599" y="384">1,450</text><text x="685" y="384">1,450</text><text x="766" y="384">1,250</text>
<text x="441" y="688">1,250</text><text x="642" y="688">7 400</text><text x="842" y="688">1,250</text><text x="642" y="702">9,900</text>
<text transform="translate(374 502) rotate(-90)">7,100</text><text transform="translate(404 381) rotate(-90)">1,880</text><text transform="translate(394 338) rotate(-90)">20</text>
<g class="bare">
<text transform="translate(387 432) rotate(-90)">290</text><text transform="translate(394 445) rotate(-90)">290</text>
<text transform="translate(387 459) rotate(-90)">290</text><text transform="translate(394 472) rotate(-90)">290</text>
<text transform="translate(387 485) rotate(-90)">290</text><text transform="translate(394 499) rotate(-90)">290</text>
<text transform="translate(387 512) rotate(-90)">290</text><text transform="translate(394 526) rotate(-90)">290</text>
<text transform="translate(387 539) rotate(-90)">290</text><text transform="translate(394 553) rotate(-90)">290</text>
<text transform="translate(387 566) rotate(-90)">290</text><text transform="translate(394 580) rotate(-90)">290</text>
<text transform="translate(387 593) rotate(-90)">290</text><text transform="translate(394 606) rotate(-90)">290</text>
<text transform="translate(387 620) rotate(-90)">290</text><text transform="translate(394 633) rotate(-90)">290</text>
<text transform="translate(387 647) rotate(-90)">290</text><text transform="translate(394 660) rotate(-90)">290</text>
<text transform="translate(587 280) rotate(90)">S-10</text><text transform="translate(630 280) rotate(90)">S-09</text>
<text transform="translate(587 735) rotate(90)">S-10</text><text transform="translate(630 735) rotate(90)">S-09</text>
</g>
</g>
<path class="head" d="M588 292.500h9l-3-3M597 292.500l-3 3M631 292.500h9l-3-3M640 292.500l-3 3M588 719.500h9l-3-3M597 719.500l-3 3M631 719.500h9l-3-3M640 719.500l-3 3"/>
<path class="ink dot" d="M599.500 293V316M642.500 293V316M599.500 696V719M642.500 702V719"/>

<g transform="translate(572 543) rotate(-39)">
<path class="ink" fill="#fff" d="M0 0H43V21H0zM0 7.500H43M0 14.500H43"/>
<g class="note"><text x="20" y="6">PLATTA</text><text x="22" y="13">ÖK ø12#150</text><text x="22" y="20">UK ø12#150</text></g>
</g>

<g class="mag"><path d="M642.500 425V662" stroke-dasharray="12 3 3 3"/><path d="M630 438l12.500-12.500L655 438"/><circle cx="642.500" cy="667" r="4.500"/></g>
<path class="magf" d="M816 417h5v3h-5zM818 430h5v3h-5zM820 443h5v3h-5zM823 457h5v3h-5zM825 470h5v3h-5zM827 484h5v3h-5zM830 497h5v3h-5zM832 510h5v3h-5zM834 524h5v3h-5zM837 537h5v3h-5zM839 551h5v3h-5zM842 564h5v3h-5zM844 577h5v3h-5zM846 590h5v3h-5zM849 603h5v3h-5zM851 616h5v3h-5zM854 630h5v3h-5zM856 643h5v3h-5zM859 657h5v3h-5z"/>
<text class="mark" transform="translate(1142 747) rotate(-90)">© NairiSargsyan.com</text>
</svg>
</div>
<div class="status">
<div class="nav3"><button aria-label="Previous zoom"><svg><use href="#undo"/></svg></button><button class="dis" aria-label="Next zoom"><svg><use href="#redo"/></svg></button><button aria-label="Zoom in"><svg><use href="#zoom"/></svg></button></div>
<button><svg><use href="#zoom"/></svg><span>91%</span><svg class="ar"><use href="#right"/></svg></button>
<button><svg><use href="#orient"/></svg><span>0.00°</span><svg class="ar"><use href="#right"/></svg></button>
<button><svg><use href="#ruler"/></svg><span>1:50</span><svg class="ar"><use href="#right"/></svg></button>
<button><svg><use href="#layers"/></svg><span>Custom</span><svg class="ar"><use href="#right"/></svg></button>
<button class="dis"><svg><use href="#mesh"/></svg><span>Entire Model</span><svg class="ar"><use href="#right"/></svg></button>
<button><svg><use href="#pen"/></svg><span>00 ArchiCAD SWE std....</span><svg class="ar"><use href="#right"/></svg></button>
<button><svg><use href="#frame"/></svg><span>03 Bygghandling</span><svg class="ar"><use href="#right"/></svg></button>
<button><svg><use href="#reno"/></svg><span>03 Bygghandling</span><svg class="ar"><use href="#right"/></svg></button>
<button><svg><use href="#build"/></svg><span>01 Plan befintlig</span><svg class="ar"><use href="#right"/></svg></button>
<button><svg><use href="#std"/></svg><span>SWE Standard</span><svg class="ar"><use href="#right"/></svg></button>
</div>
</section>

<aside class="toolbox">
<div class="grip short"></div>
<div class="top"><button class="dk" aria-label="Arrow"><svg><use href="#arrow"/></svg></button><button class="dk" aria-label="Marquee"><svg><use href="#marquee"/></svg></button></div>
<h2>Design</h2>
<button aria-label="Wall"><svg><use href="#wall"/></svg></button><button aria-label="Door"><svg><use href="#door"/></svg></button><button aria-label="Window"><svg><use href="#win"/></svg></button><button aria-label="Skylight"><svg><use href="#slabs"/></svg></button><button aria-label="Roof"><svg><use href="#roof"/></svg></button><button aria-label="Shell"><svg><use href="#shell"/></svg></button><button aria-label="Morph"><svg><use href="#morph"/></svg></button><button aria-label="Beam"><svg><use href="#beam"/></svg></button><button aria-label="Column"><svg><use href="#column"/></svg></button><button aria-label="Slab"><svg><use href="#slab"/></svg></button><button aria-label="Stair"><svg><use href="#stairs"/></svg></button><button aria-label="Railing"><svg><use href="#para"/></svg></button><button aria-label="Curtain wall"><svg><use href="#sched"/></svg></button><button aria-label="Zone"><svg><use href="#stamp"/></svg></button><button class="dk" aria-label="Object"><svg><use href="#chair"/></svg></button><button aria-label="Lamp"><svg><use href="#lamp"/></svg></button>
<h2>Docun</h2>
<button class="dk on" aria-label="Dimension"><svg><use href="#dim"/></svg></button><button class="dk" aria-label="Angle"><svg><use href="#angle"/></svg></button><button class="dk" aria-label="Radial"><svg><use href="#radial"/></svg></button><button class="dk" aria-label="Level"><svg><use href="#levelc"/></svg></button><button class="dk" aria-label="Section"><svg><use href="#steps"/></svg></button><button class="dk" aria-label="Elevation"><svg><use href="#lvl"/></svg></button><button class="dk" aria-label="Text"><svg><use href="#text"/></svg></button><button class="dk" aria-label="Label"><svg class="w"><use href="#label"/></svg></button><button class="dk" aria-label="Fill"><svg><use href="#fill"/></svg></button><button class="dk" aria-label="Line"><svg><use href="#line"/></svg></button><button class="dk" aria-label="Circle"><svg><use href="#circle"/></svg></button><button class="dk" aria-label="Polyline"><svg><use href="#poly"/></svg></button><button class="dk" aria-label="Spline"><svg><use href="#spline"/></svg></button><button aria-label="Hotspot"><svg><use href="#hot"/></svg></button><button class="dk" aria-label="Drawing"><svg><use href="#window"/></svg></button><button class="dk" aria-label="Figure"><svg><use href="#image"/></svg></button><button class="dk" aria-label="Worksheet"><svg><use href="#sec"/></svg></button><button class="dk" aria-label="Detail"><svg><use href="#globe"/></svg></button>
<h2>More</h2>
<button aria-label="Grid element"><svg><use href="#pin"/></svg></button><button aria-label="Corner window"><svg><use href="#pane"/></svg></button><button aria-label="Curtain panel"><svg><use href="#sched"/></svg></button><button class="dk" aria-label="Sun"><svg><use href="#sun"/></svg></button><button aria-label="Camera"><svg><use href="#video"/></svg></button>
</aside>
</main>

<footer class="bottom">
<div class="sep"></div>
<button class="btn sq" aria-label="Close"><svg class="ar"><use href="#x"/></svg></button><button class="btn sq" aria-label="Guides"><svg><use href="#hatchl"/></svg></button><button class="btn m" aria-label="Grid snap"><svg><use href="#grids"/></svg><svg class="ar"><use href="#right"/></svg></button><button class="btn m" aria-label="Snap point"><svg><use href="#plus"/></svg><svg class="ar"><use href="#right"/></svg></button>
<div class="sep"></div>
<button class="delta">Δ</button><div class="coords"><label>Δx: <input value="4380"></label><label>Δy: <input value="-2767"></label></div>
<button class="delta">Δ</button><div class="coords"><label>Δr: <input value="5180"></label><label>α: <input value="327.72°"></label></div>
<button class="btn m off" aria-label="Line mode"><svg><use href="#line"/></svg><svg class="ar"><use href="#right"/></svg></button>
<div class="zero"><span>Δz: <i>0</i></span><span><i>to Project Zero</i></span></div><button class="btn tinyb" aria-label="Origin"><svg class="ar"><use href="#right"/></svg></button>
<div class="sep"></div>
<button class="btn sq orange" aria-label="Set square"><svg><use href="#tri"/></svg></button><button class="btn nar" aria-label="More constraints"><svg class="ar"><use href="#right"/></svg></button>
<button class="m" aria-label="Perpendicular"><svg><use href="#check"/></svg><svg class="ar"><use href="#right"/></svg></button><button class="btn m off" aria-label="Curve"><svg><use href="#redo"/></svg><svg class="ar"><use href="#right"/></svg></button><button class="btn m" aria-label="Group"><svg><use href="#bbox"/></svg><svg class="ar"><use href="#right"/></svg></button><button class="btn sq" aria-label="Magic wand"><svg><use href="#wand"/></svg></button>
<button class="btn sq on" aria-label="Special snap"><svg><use href="#guide"/></svg></button><button class="btn nar" aria-label="Snap options"><svg class="ar"><use href="#right"/></svg></button>
<div class="half"><span>Half</span><i>2</i></div><button class="btn tinyb" aria-label="Division"><svg class="ar"><use href="#right"/></svg></button>
<div class="sep"></div>
<button class="btn word">OK</button><button class="btn word">Cancel</button>
<div class="sep"></div>
<button class="title">Element Attributes<svg class="ar"><use href="#down"/></svg></button>
<div class="icons"><button aria-label="Layer"><svg><use href="#layb"/></svg></button><button aria-label="Pen"><svg><use href="#pen"/></svg></button><button aria-label="Surface"><svg><use href="#layers"/></svg></button><button class="navy" aria-label="Renovation"><svg><use href="#reno"/></svg></button></div>
<div class="sep"></div>
<div class="icons"><button class="on" aria-label="Composite"><svg class="hv"><use href="#bands"/></svg></button><button class="on" aria-label="Grid"><svg><use href="#sched"/></svg></button><button class="dis" aria-label="Bring forward"><svg class="ar"><use href="#tru"/></svg></button><button class="dis" aria-label="Send backward"><svg class="ar"><use href="#trd"/></svg></button></div>
<div class="sep"></div>
<div class="icons"><button class="navy" aria-label="Trace"><svg><use href="#cloud"/></svg></button><button aria-label="Capture"><svg><use href="#cam"/></svg></button><button class="dis" aria-label="Compare"><svg><use href="#slabs"/></svg></button><button class="dis" aria-label="Home"><svg><use href="#home"/></svg></button><button class="pale" aria-label="Reference"><svg><use href="#hash"/></svg></button></div>
<button class="title">Reference Line and Plane<svg class="ar"><use href="#down"/></svg></button>
<div class="icons"><button aria-label="Profile"><svg><use href="#ibeam"/></svg></button><button aria-label="Run"><svg><use href="#play"/></svg></button><button class="dis" aria-label="Annotate"><svg><use href="#adjust"/></svg></button></div>
</footer>
</body>
</html>
```
FILE: styles.css
```css
* { box-sizing: border-box; }
body {
  margin: 0; height: 100vh; display: flex; flex-direction: column; overflow: hidden;
  font: 600 6px/11px "Open Sans", "Noto Sans", sans-serif; color: #222; background: #f0f0f0;
}
.defs { position: absolute; width: 0; height: 0; }
button { font: inherit; color: inherit; background: none; border: 0; padding: 0; margin: 0; display: flex; align-items: center; justify-content: center; white-space: nowrap; }
a { color: inherit; text-decoration: none; }
svg { width: 13px; height: 13px; flex: none; fill: none; stroke: #4a4f55; stroke-width: 1.2; color: #3a3f45; }
.s { fill: currentColor; stroke: none; }
svg.ar { width: 6px; height: 6px; color: #111; }
svg.w { width: 19px; height: 11px; }
.blue svg { stroke: #3279d4; color: #3279d4; }
.navy svg { stroke: #34618f; color: #34618f; }
.navy svg.ar, .blue svg.ar { color: #111; }
.pale svg { stroke: #a9c3e2; color: #a9c3e2; }
.dis { color: #999; }
.dis svg, .dis svg.ar { stroke: #b4b4b4; color: #b4b4b4; }
.on { background: #c0dff7; box-shadow: inset 0 0 0 1px #a9d2f2; }
.btn { background: #e2e2e2; border: 1px solid #bcbcbc; }
.btn.on { background: #c0dff7; border-color: #4c9bd8; }
.btn.off { background: #cdcdcd; border-color: #c2c2c2; }
.off svg, .off svg.ar { stroke: #999; color: #999; }

.menubar { display: flex; justify-content: space-between; height: 15px; background: #fff; padding-left: 5px; font: 400 9px/16px Roboto, sans-serif; }
.menubar nav { display: flex; gap: 8px; }
.winctl { display: flex; gap: 1px; }
.winctl svg { width: 8px; height: 8px; stroke: #111; stroke-width: 1.5; }

.toolbar { display: flex; align-items: center; height: 21px; }
.grp { display: flex; align-items: center; border-left: 1px solid #aaa; padding: 0 2px; height: 16px; }
.grp:first-child { margin-left: 3px; }
.grp button { width: 17px; height: 18px; }
.grp.tight button { width: 15px; }
.grp.tight button.split { width: 29px; gap: 3px; }

main { flex: 1; min-height: 0; display: flex; }
.navigator { width: 129px; flex: none; display: flex; flex-direction: column; border-left: 1px solid #808080; border-right: 1px solid #c8c8c8; border-top: 1px solid #d0d0d0; }
.grip { height: 1px; width: 42px; margin: 1px auto 0; background: #999; flex: none; }
.grip.low { margin: 5px auto 2px; }
.navtabs { display: flex; justify-content: space-between; align-items: center; height: 23px; flex: none; padding: 0 1px; }
.navtabs > div { display: flex; }
.navtabs button { width: 18px; height: 16px; }
.navtabs .btn { width: 25px; gap: 2px; }
.treebox { flex: 1; min-height: 0; display: flex; background: #fff; overflow: hidden; }
.tree { list-style: none; margin: 0; padding: 0; flex: 1; min-width: 0; }
.tree li { display: flex; align-items: center; height: 13px; padding-left: 22px; white-space: nowrap; gap: 2px; }
.tree li.deep { padding-left: 28px; }
.tree li.fold { padding-left: 16px; }
.tree li.sel { background: #d6d6d6; }
.tree svg { width: 12px; height: 12px; stroke: #3d82d2; color: #3d82d2; }
.tree .fold svg { stroke: #777; }
.tree i, .tree svg.tw { width: 5px; height: 6px; flex: none; stroke: #555; }
.vscroll { width: 12px; flex: none; display: flex; flex-direction: column; align-items: center; padding: 3px 0; background: #f6f6f6; }
.vscroll .thumb { flex: 0 1 65%; margin-top: 80px; width: 100%; background: #cdcdcd; }
.vscroll svg { width: 7px; height: 7px; }
.vscroll svg:last-child { margin-top: auto; }
.hscroll { display: flex; align-items: center; height: 12px; padding: 0 15px 0 1px; flex: none; }
.hscroll svg { width: 7px; height: 7px; }
.hscroll svg:last-child { margin-left: auto; }
.hscroll .thumb { width: 51px; height: 10px; margin-left: 4px; background: #cdcdcd; }
.navacts { display: flex; justify-content: flex-end; gap: 5px; height: 25px; padding-right: 2px; flex: none; }
.navacts .red svg { stroke: #e0392b; stroke-width: 2; width: 12px; }
.prophead { height: 11px; background: #d4d4d4; justify-content: flex-start; gap: 4px; padding-left: 1px; flex: none; }
.props { height: 113px; flex: none; display: flex; flex-direction: column; justify-content: space-between; padding-bottom: 1px; }
.props button { gap: 3px; height: 11px; padding-right: 1px; }
.props button svg:first-child { width: 11px; height: 11px; }
.props span { flex: 1; text-align: left; }

.work { flex: 1; min-width: 0; display: flex; flex-direction: column; }
.infobar { display: flex; align-items: center; height: 26px; flex: none; border-top: 1px solid #d0d0d0; padding-left: 4px; }
.cell { flex: 1; min-width: 0; height: 24px; border-right: 1px solid #b4b4b4; padding: 0 3px; display: flex; align-items: center; }
.infobar .rest { width: 30px; }
.spread { justify-content: space-between; }
.end { justify-content: flex-end; gap: 4px; }
.cell .tiny { font-size: 5px; border-left: 1px solid #999; padding-left: 2px; margin-left: -2px; }
.infobar .btn { min-width: 26px; height: 17px; gap: 2px; }
.infobar .wide { min-width: 25px; height: 17px; gap: 2px; }
.infobar .layer { flex: 1; gap: 2px; }
.layer svg.eye { width: 10px; height: 10px; }
.infobar svg.d { width: 15px; }
.pair { display: flex; }
.num button { width: 26px; height: 17px; }
.num u { text-decoration: none; border-bottom: 1px solid #444; padding: 0 3px; line-height: 8px; }
.num b { font-weight: 600; border-top: 1px solid #444; padding: 0 3px; line-height: 8px; }
.cell input, .cell select { font: inherit; color: inherit; background: #fff; border: 1px solid #999; height: 13px; border-radius: 0; padding: 0 3px; }
.cell input { width: 52px; }
.combo { flex: 1; min-width: 0; display: grid; align-items: center; }
.combo > * { grid-area: 1 / 1; }
.combo select { appearance: none; width: 100%; }
.combo svg { width: 7px; height: 7px; justify-self: end; margin-right: 3px; pointer-events: none; }
.cell label { display: flex; }

.tabs { display: flex; height: 14px; flex: none; background: #d6d6d6; }
.tabs a { flex: 1; min-width: 0; display: flex; align-items: center; gap: 1px; padding-left: 2px; border-right: 1px solid #c2c2c2; white-space: nowrap; }
.tabs a.cur { background: #fff; }
.tabs svg { width: 12px; height: 12px; }
.tabs svg.bl { stroke: #3279d4; color: #3279d4; }
.tabs a button { margin-left: auto; padding-right: 4px; }
.tabs a button svg { width: 7px; height: 7px; stroke: #111; stroke-width: 3; }
.tabs .more { width: 30px; background: #eee; gap: 1px; }
.tabs .more svg.w { width: 16px; }
.tabs svg.ar { width: 6px; height: 6px; }

.canvas { flex: 1; min-height: 0; background: #fff; }
.canvas > svg { display: block; width: 100%; height: 100%; stroke-width: 1; stroke: none; }
.gridl { stroke: #e0e0e0; }
.thin { stroke: #8c8c8c; fill: none; }
.canvas .beams { fill: #fff; }
.ink { stroke: #333; }
.wallin { stroke: #555; fill: none; }
.head { stroke: #222; fill: none; }
.dot { stroke-dasharray: 2 2; }
.tick { stroke: #444; }
.joist { stroke: #b3b0dc; stroke-dasharray: 8 12; }
.joists { stroke: #b3b0dc; }
.axis { stroke: #5a52cf; stroke-width: 1.2; stroke-dasharray: 10 3 3 3; }
.bubble { fill: #fff; stroke: #5650c0; stroke-width: 1.2; }
.canvas circle { fill: #222; }
.canvas .bubble circle { fill: #fff; }
.btext { font: 8px "Liberation Sans", Arial, sans-serif; fill: #111; text-anchor: middle; }
.dimt { font: 8px "DejaVu Sans Mono", monospace; fill: #111; text-anchor: middle; paint-order: stroke; stroke: #fff; stroke-width: 4; }
.dimt .bare { stroke: none; }
.note { font: 6px "DejaVu Sans Mono", monospace; fill: #111; text-anchor: middle; }
.mag { stroke: #e040c8; fill: none; }
.canvas .mag circle { fill: #fff; }
.magf { fill: #d05cc4; }
.mark { font: 11px "DejaVu Sans Mono", monospace; fill: #111; }

.status { display: flex; height: 14px; flex: none; border-top: 1px solid #ddd; }
.status > button { flex: 1; min-width: 0; border-left: 1px solid #b8b8b8; padding: 0 2px; gap: 2px; margin: 1px 0; }
.status span { flex: 1; }
.status svg { width: 11px; height: 11px; }
.status svg.ar { width: 6px; height: 6px; }
.nav3 { width: 43px; display: flex; justify-content: space-around; }

.toolbox { width: 27px; flex: none; display: flex; flex-direction: column; border-left: 1px solid #c8c8c8; border-top: 1px solid #d0d0d0; overflow: hidden; }
.grip.short { width: 10px; }
.toolbox .top { height: 36px; flex: none; display: flex; flex-direction: column; padding-top: 2px; }
.toolbox button { flex: 1; width: 22px; min-height: 0; }
.toolbox svg { width: 14px; height: 14px; stroke: #929292; stroke-width: 1; }
.toolbox .dk svg { stroke: #3a3f45; }
.toolbox svg.w { width: 17px; }
.toolbox h2 { margin: 0; height: 14px; flex: none; font: inherit; line-height: 12px; background: #d6d6d6; border-bottom: 2px solid #f0f0f0; padding-left: 1px; }

.bottom { display: flex; align-items: center; height: 22px; flex: none; border-top: 1px solid #d8d8d8; border-bottom: 2px solid #d8d8d8; padding: 0 3px; gap: 2px; }
.bottom .sep { width: 1px; height: 14px; background: #aaa; margin: 0 1px; }
.bottom .btn { height: 17px; background: #d8d8d8; }
.bottom .btn.on { background: #c0dff7; }
.sq { width: 16px; }
.m { width: 24px; gap: 2px; }
.nar { width: 7px; margin-left: -1px; }
.bottom .tinyb { width: 8px; height: 8px; }
.delta { width: 9px; height: 17px; background: #c0dff7; border: 1px solid #4c9bd8; font-size: 7px; font-weight: 700; }
.coords, .zero, .half { display: flex; flex-direction: column; line-height: 9px; }
.coords { background: #fff; width: 73px; padding-left: 14px; margin-left: -2px; }
.coords label { display: flex; gap: 1px; height: 9px; }
.coords input { font: inherit; color: inherit; border: 0; padding: 0; width: 40px; height: 9px; background: none; }
.zero { width: 60px; }
.zero i, .half i { font-style: normal; color: #777; }
.half { width: 45px; padding-left: 3px; }
.word { width: 34px; color: #888; }
.title { font: 400 9px/11px Roboto, sans-serif; gap: 5px; margin-left: 1px; }
.icons { display: flex; }
.icons button { width: 17px; height: 17px; }
.icons svg.ar { width: 8px; height: 8px; }
.orange svg { stroke: #b9773c; }
```
